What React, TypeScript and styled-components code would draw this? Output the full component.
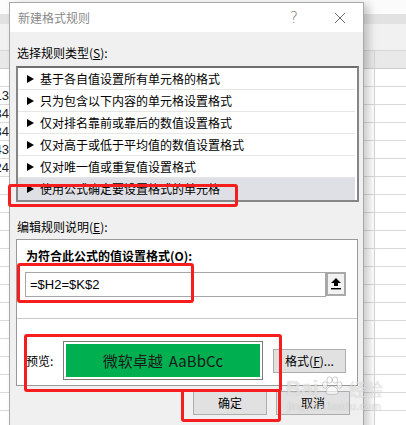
import React from 'react';
import styled, { createGlobalStyle } from 'styled-components';

const CJK = `"Noto Sans CJK SC", "Liberation Sans", sans-serif`;

const GlobalStyle = createGlobalStyle`
    html, body {
        margin: 0;
        padding: 0;
        background: #fff;
    }
    body {
        font-family: ${CJK};
        overflow: hidden;
    }
`;

const Screen = styled.div`
    position: relative;
    width: 406px;
    height: 425px;
    overflow: hidden;
    background: #fff;
`;

// spreadsheet behind the dialog
const Sheet = styled.div`
    display: flex;
    flex-direction: column;
`;
const Band = styled.div<{ $h: number; $bg: string; $line?: string }>`
    height: ${p => p.$h}px;
    background: ${p => p.$bg};
    border-bottom: ${p => (p.$line ? `1px solid ${p.$line}` : 'none')};
    box-sizing: border-box;
`;
const SheetRow = styled.div<{ $header?: boolean }>`
    display: grid;
    grid-template-columns: 11px 364px 1fr;
    height: 18px;
    box-sizing: border-box;
    background: ${p => (p.$header ? '#e9e9e9' : '#fff')};
    border-bottom: 1px solid ${p => (p.$header ? '#cfcfcf' : '#dadada')};
`;
const Cell = styled.div`
    display: flex;
    justify-content: flex-end;
    align-items: flex-end;
    overflow: hidden;
    white-space: nowrap;
    border-right: 1px solid #d6d6d6;
    padding-right: 1px;
    font: 13px/16px "Liberation Sans", sans-serif;
    color: #222;
`;

// the dialog
const Dialog = styled.div`
    position: absolute;
    left: 9px;
    top: 2px;
    width: 355px;
    height: 440px;
    box-sizing: border-box;
    border: 1px solid #a8a8a8;
    background: #f0f0f0;
    box-shadow: 5px 2px 8px rgba(0, 0, 0, 0.2);
    display: flex;
    flex-direction: column;
`;
const TitleBar = styled.div`
    height: 29px;
    background: #fff;
    display: flex;
    align-items: center;
    padding-left: 8px;
`;
const Title = styled.div`
    flex: 1;
    font: 12px/16px ${CJK};
    color: #8a8a8a;
`;
const TitleButton = styled.div`
    width: 46px;
    height: 29px;
    display: flex;
    align-items: center;
    justify-content: center;
    color: #777;
    font: 300 15px "DejaVu Sans", sans-serif;
`;
const Body = styled.div`
    display: flex;
    flex-direction: column;
    padding-left: 6px;
`;
const SectionLabel = styled.div<{ $top: number }>`
    margin-top: ${p => p.$top}px;
    padding-left: 1px;
    font: 12px/16px ${CJK};
    color: #000;
    u { text-decoration: underline; text-underline-offset: 1px; }
`;
const RuleList = styled.div`
    margin-top: 5px;
    width: 343px;
    box-sizing: border-box;
    border: 2px solid #858585;
    border-top-color: #6e6e6e;
    background: #fff;
    padding-right: 2px;
`;
const RuleRow = styled.div<{ $selected?: boolean }>`
    height: 22px;
    box-sizing: border-box;
    display: flex;
    align-items: center;
    gap: 6px;
    padding-left: 9px;
    background: ${p => (p.$selected ? '#dfdfe6' : '#fff')};
    border-bottom: 1px solid ${p => (p.$selected ? 'transparent' : '#e6e6e6')};
    font: 12px/16px ${CJK};
    color: #000;
`;
const Panel = styled.div`
    margin-top: 4px;
    width: 342px;
    box-sizing: border-box;
    border: 1px solid #9a9a9a;
    background: #fff;
    display: flex;
    flex-direction: column;
`;
const FormulaSection = styled.div`
    padding: 8px 10px 0 8px;
`;
const BoldLabel = styled.div`
    padding-left: 1px;
    font: bold 12px/16px ${CJK};
    color: #000;
`;
const FormulaRow = styled.div`
    margin-top: 8px;
    display: flex;
`;
const FormulaInput = styled.div`
    width: 301px;
    height: 25px;
    box-sizing: border-box;
    border: 1px solid #a6a6a6;
    display: flex;
    align-items: center;
    padding-left: 4px;
    font: 13px "Liberation Sans", sans-serif;
    color: #000;
`;
const RefButton = styled.div`
    width: 20px;
    height: 24px;
    box-sizing: border-box;
    border: 2px solid #a9a9a9;
    background: #f2f2f2;
    display: flex;
    align-items: center;
    justify-content: center;
`;
const Divider = styled.div`
    margin-top: 21px;
    height: 1px;
    background: #c9c9c9;
`;
const PreviewRow = styled.div`
    display: flex;
    align-items: center;
    padding: 22px 0 5px 9px;
`;
const PreviewLabel = styled.div`
    width: 37px;
    font: 12px/16px ${CJK};
    color: #000;
`;
const PreviewBox = styled.div`
    width: 200px;
    height: 39px;
    box-sizing: border-box;
    border: 1px solid #7c7c7c;
    padding: 2px;
    background: #fff;
`;
const PreviewFill = styled.div`
    height: 100%;
    background: #00b050;
    display: flex;
    align-items: center;
    justify-content: center;
    gap: 6px;
    font: 15px/20px ${CJK};
    color: #1a1a1a;
`;
const PushButton = styled.div<{ $w: number }>`
    width: ${p => p.$w}px;
    height: 24px;
    box-sizing: border-box;
    border: 1px solid #adadad;
    background: #e1e1e1;
    display: flex;
    align-items: center;
    justify-content: center;
    font: 12px/16px ${CJK};
    color: #000;
    u { text-decoration: underline; text-underline-offset: 1px; }
`;
const FormatButton = styled(PushButton)`
    margin-left: 10px;
`;
const ButtonRow = styled.div`
    margin-top: 5px;
    display: flex;
    justify-content: flex-end;
    gap: 9px;
    padding-right: 13px;
`;

// red marks drawn over the screenshot
const Mark = styled.div`
    position: absolute;
    box-sizing: border-box;
    border: 3px solid #f51d1d;
    border-radius: 3px;
`;

const Watermark = styled.div`
    position: absolute;
    left: 286px;
    top: 376px;
    display: flex;
    flex-direction: column;
    align-items: center;
    color: rgba(255, 255, 255, 0.6);
    text-shadow: 0 0 1px rgba(110, 110, 110, 0.45);
    pointer-events: none;
`;
const WmLogo = styled.div`
    display: flex;
    align-items: flex-end;
    gap: 2px;
    font: bold 21px/24px "Liberation Sans", sans-serif;
    span { font: 17px/22px ${CJK}; margin-left: 4px; }
`;
const WmUrl = styled.div`
    font: 11px/13px "Liberation Sans", sans-serif;
    letter-spacing: 0.3px;
`;

const Triangle = () => (
    <svg width="7" height="8" viewBox="0 0 7 8"><polygon points="0,0 7,4 0,8" fill="#000" /></svg>
);

const RefIcon = () => (
    <svg width="10" height="12" viewBox="0 0 10 12">
        <polygon points="5,0 10,5 7,5 7,8 3,8 3,5 0,5" fill="#000" />
        <rect x="0" y="10" width="10" height="1.4" fill="#000" />
    </svg>
);

const Paw = () => (
    <svg width="22" height="20" viewBox="0 0 22 20" style={{ marginBottom: 4 }}>
        <g fill="rgba(255,255,255,0.6)" stroke="rgba(120,120,120,0.45)" strokeWidth="0.8">
            <ellipse cx="4" cy="9" rx="2.6" ry="3.2" />
            <ellipse cx="8.5" cy="4" rx="2.6" ry="3.2" />
            <ellipse cx="14" cy="4" rx="2.6" ry="3.2" />
            <ellipse cx="18.5" cy="9" rx="2.6" ry="3.2" />
            <path d="M5 17 C5 12 9 10 11 10 C13 10 17 12 17 17 C17 19 5 19 5 17 Z" />
        </g>
    </svg>
);

const rules = [
    '基于各自值设置所有单元格的格式',
    '只为包含以下内容的单元格设置格式',
    '仅对排名靠前或靠后的数值设置格式',
    '仅对高于或低于平均值的数值设置格式',
    '仅对唯一值或重复值设置格式',
    '使用公式确定要设置格式的单元格',
];

const cellValues = ['', '13', '34', '34', '43', '24'];

const App: React.FC = () => {
    const rows = Array.from({ length: 20 }, (_, i) => cellValues[i] || '');

    return <Screen>
        <GlobalStyle />
        <Sheet>
            <Band $h={14} $bg='#fbfbfb' />
            <Band $h={10} $bg='#e2e2e2' />
            <Band $h={27} $bg='#f1f1f1' $line='#d6d6d6' />
            <SheetRow $header>
                <Cell />
                <Cell />
                <div />
            </SheetRow>
            {rows.map((value, i) =>
                <SheetRow key={i}>
                    <Cell>{value}</Cell>
                    <Cell />
                    <div />
                </SheetRow>
            )}
        </Sheet>

        <Dialog>
            <TitleBar>
                <Title>新建格式规则</Title>
                <TitleButton>?</TitleButton>
                <TitleButton>
                    <svg width="12" height="12" viewBox="0 0 12 12">
                        <path d="M1 1 L11 11 M11 1 L1 11" stroke="#6a6a6a" strokeWidth="1" />
                    </svg>
                </TitleButton>
            </TitleBar>
            <Body>
                <SectionLabel $top={13}>选择规则类型(<u>S</u>):</SectionLabel>
                <RuleList>
                    {rules.map((rule, i) =>
                        <RuleRow key={rule} $selected={i === rules.length - 1}>
                            <Triangle />
                            {rule}
                        </RuleRow>
                    )}
                </RuleList>
                <SectionLabel $top={17}>编辑规则说明(<u>E</u>):</SectionLabel>
                <Panel>
                    <FormulaSection>
                        <BoldLabel>为符合此公式的值设置格式(O):</BoldLabel>
                        <FormulaRow>
                            <FormulaInput>=$H2=$K$2</FormulaInput>
                            <RefButton><RefIcon /></RefButton>
                        </FormulaRow>
                    </FormulaSection>
                    <Divider />
                    <PreviewRow>
                        <PreviewLabel>预览:</PreviewLabel>
                        <PreviewBox>
                            <PreviewFill>
                                <span>微软卓越</span>
                                <span>AaBbCc</span>
                            </PreviewFill>
                        </PreviewBox>
                        <FormatButton $w={73}>格式(<u>F</u>)...</FormatButton>
                    </PreviewRow>
                </Panel>
                <ButtonRow>
                    <PushButton $w={74}>确定</PushButton>
                    <PushButton $w={74}>取消</PushButton>
                </ButtonRow>
            </Body>
        </Dialog>

        <Mark style={{ left: 8, top: 184, width: 230, height: 23 }} />
        <Mark style={{ left: 17, top: 263, width: 177, height: 40 }} />
        <Mark style={{ left: 24, top: 334, width: 258, height: 58 }} />
        <Mark style={{ left: 181, top: 389, width: 100, height: 33 }} />

        <Watermark>
            <WmLogo>Bai<Paw /><span>经验</span></WmLogo>
            <WmUrl>jingyan.baidu.com</WmUrl>
        </Watermark>
    </Screen>
}

export default App;
